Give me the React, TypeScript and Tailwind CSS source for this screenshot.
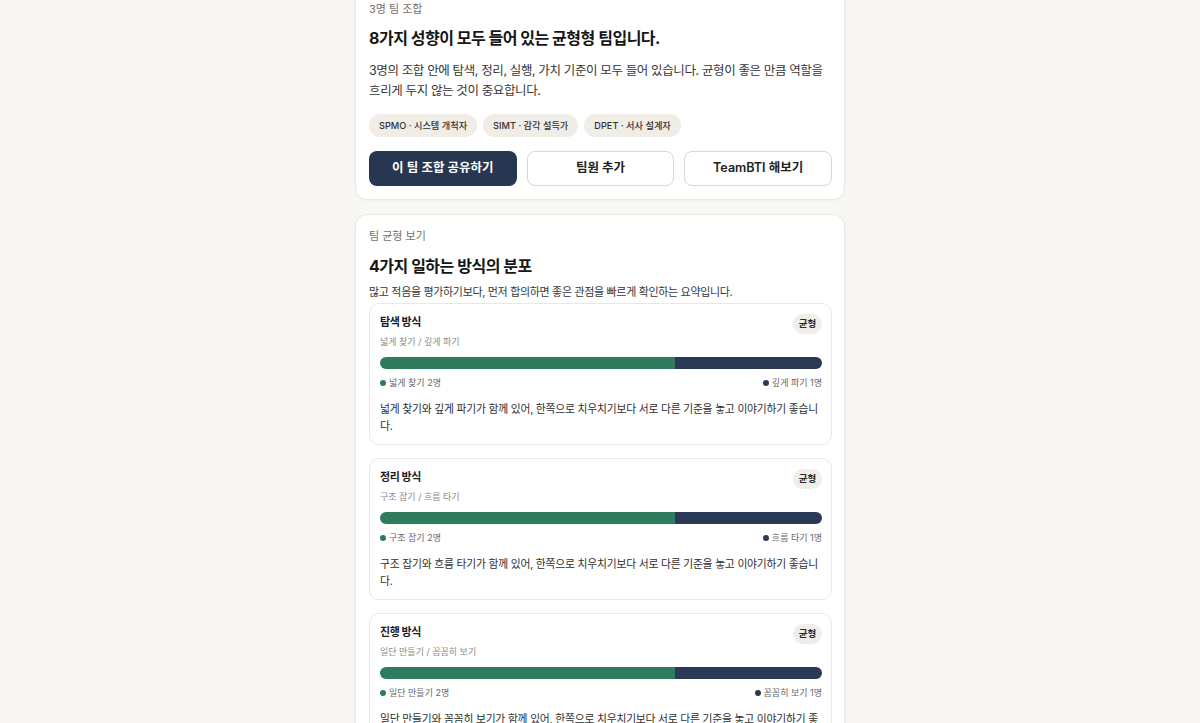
import React from 'react';

type Axis = {
  title: string;
  sub: string;
  left: string;
  right: string;
  leftCount: number;
  rightCount: number;
  note: string;
};

const members = ['SPMO · 시스템 개척자', 'SIMT · 감각 설득가', 'DPET · 서사 설계자'];

const axes: Axis[] = [
  {
    title: '탐색 방식',
    sub: '넓게 찾기 / 깊게 파기',
    left: '넓게 찾기',
    right: '깊게 파기',
    leftCount: 2,
    rightCount: 1,
    note: '넓게 찾기와 깊게 파기가 함께 있어, 한쪽으로 치우치기보다 서로 다른 기준을 놓고 이야기하기 좋습니다.',
  },
  {
    title: '정리 방식',
    sub: '구조 잡기 / 흐름 타기',
    left: '구조 잡기',
    right: '흐름 타기',
    leftCount: 2,
    rightCount: 1,
    note: '구조 잡기와 흐름 타기가 함께 있어, 한쪽으로 치우치기보다 서로 다른 기준을 놓고 이야기하기 좋습니다.',
  },
  {
    title: '진행 방식',
    sub: '일단 만들기 / 꼼꼼히 보기',
    left: '일단 만들기',
    right: '꼼꼼히 보기',
    leftCount: 2,
    rightCount: 1,
    note: '일단 만들기와 꼼꼼히 보기가 함께 있어, 한쪽으로 치우치기보다 서로 다른 기준을 놓고 이야기하기 좋습니다.',
  },
  {
    title: '판단 방식',
    sub: '논리 기준 / 가치 기준',
    left: '논리 기준',
    right: '가치 기준',
    leftCount: 1,
    rightCount: 2,
    note: '논리 기준과 가치 기준이 함께 있어, 한쪽으로 치우치기보다 서로 다른 기준을 놓고 이야기하기 좋습니다.',
  },
];

function AxisCard({ axis }: { axis: Axis }) {
  const total = axis.leftCount + axis.rightCount;
  const leftPct = (axis.leftCount / total) * 100;

  return (
    <div className="rounded-[10px] border border-[#ebe8e1] bg-white pl-[10px] pr-[9px] pt-[10px] pb-[9px]">
      <div className="flex items-start justify-between">
        <div className="pt-[1px] text-[11px] font-bold leading-[14px] tracking-[-0.04em] text-[#1d1d1d]">{axis.title}</div>
        <span className="flex h-[20px] w-[29px] items-center justify-center rounded-full bg-[#f0eee8] text-[9.5px] font-bold text-[#2a2a2a]">
          균형
        </span>
      </div>
      <div className="text-[9px] leading-[15px] text-[#8a8a8a]">{axis.sub}</div>
      <div className="mt-[8px] flex h-[12px] w-full overflow-hidden rounded-full">
        <div className="h-full bg-[#2f7b5d]" style={{ width: `${leftPct}%` }} />
        <div className="h-full flex-1 bg-[#2a3956]" />
      </div>
      <div className="mt-[7px] flex items-center justify-between text-[9px] leading-[14px] text-[#666]">
        <span className="flex items-center gap-[3px]">
          <span className="h-[6px] w-[6px] rounded-full bg-[#2f7b5d]" />
          {axis.left} {axis.leftCount}명
        </span>
        <span className="flex items-center gap-[3px]">
          <span className="h-[6px] w-[6px] rounded-full bg-[#2a3956]" />
          {axis.right} {axis.rightCount}명
        </span>
      </div>
      <p className="mt-[11px] text-[10.8px] leading-[17px] tracking-[-0.02em] text-[#2e2e2e]">{axis.note}</p>
    </div>
  );
}

export default function App() {
  return (
    <div className="flow-root min-h-screen bg-[#f8f7f3] font-[Inter,'Noto_Sans_CJK_KR',sans-serif] text-[#1d1d1d]">
      <div className="mx-auto -mt-[13px] flex w-[490px] flex-col gap-[14px] pb-10">
        {/* team summary */}
        <section className="rounded-[12px] border border-[#ebe8e1] bg-white pl-[13px] pr-[12px] pt-[13px] pb-[13px] shadow-[0_1px_3px_rgba(0,0,0,0.04)]">
          <div className="text-[11px] leading-4 text-[#707070]">3명 팀 조합</div>
          <h2 className="mt-[10px] text-[16px] font-bold leading-[22px] tracking-[-0.03em] text-[#161616]">
            8가지 성향이 모두 들어 있는 균형형 팀입니다.
          </h2>
          <p className="mt-[12px] text-[12.5px] leading-[20px] tracking-[-0.03em] text-[#363636]">
            3명의 조합 안에 탐색, 정리, 실행, 가치 기준이 모두 들어 있습니다. 균형이 좋은 만큼 역할을 흐리게 두지 않는 것이 중요합니다.
          </p>
          <div className="mt-[13px] flex gap-[6px]">
            {members.map((m) => (
              <span key={m} className="flex h-[23px] items-center rounded-full bg-[#efede6] px-[10px] text-[9.2px] font-medium text-[#333]">
                {m}
              </span>
            ))}
          </div>
          <div className="mt-[14px] grid grid-cols-3 gap-[10px]">
            <button className="h-[35px] rounded-[8px] bg-[#273651] text-[12.5px] font-semibold text-white">이 팀 조합 공유하기</button>
            <button className="h-[35px] rounded-[8px] border border-[#d9d7d1] bg-white text-[12.5px] font-semibold text-[#222]">팀원 추가</button>
            <button className="h-[35px] rounded-[8px] border border-[#d9d7d1] bg-white text-[12.5px] font-semibold text-[#222]">TeamBTI 해보기</button>
          </div>
        </section>

        {/* balance */}
        <section className="rounded-[12px] border border-[#ebe8e1] bg-white pl-[13px] pr-[12px] pt-[13px] pb-[13px] shadow-[0_1px_3px_rgba(0,0,0,0.04)]">
          <div className="text-[11px] leading-4 text-[#707070]">팀 균형 보기</div>
          <h2 className="mt-[11px] text-[16px] font-bold leading-[22px] tracking-[-0.03em] text-[#161616]">4가지 일하는 방식의 분포</h2>
          <p className="mt-[7px] text-[11px] leading-4 tracking-[-0.03em] text-[#363636]">
            많고 적음을 평가하기보다, 먼저 합의하면 좋은 관점을 빠르게 확인하는 요약입니다.
          </p>
          <div className="mt-[3px] flex flex-col gap-[13px]">
            {axes.map((a) => (
              <AxisCard key={a.title} axis={a} />
            ))}
          </div>
        </section>
      </div>
    </div>
  );
}
